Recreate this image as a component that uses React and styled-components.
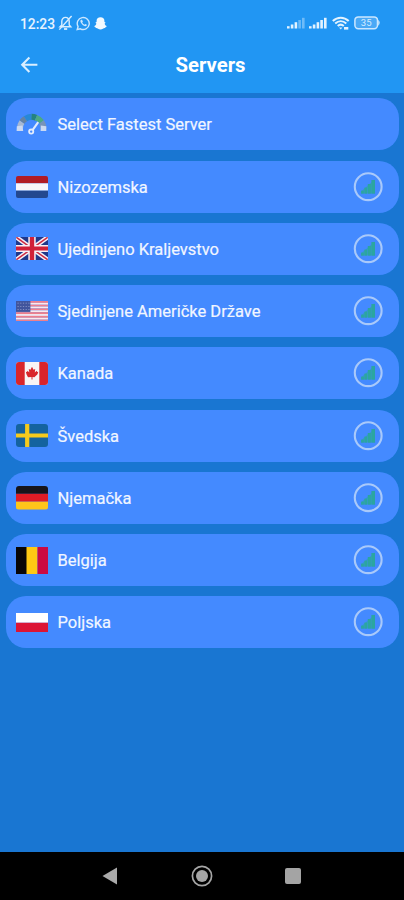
import React from 'react'
import styled, { createGlobalStyle } from 'styled-components'

const GlobalStyle = createGlobalStyle`
  * {
    box-sizing: border-box;
  }
  body {
    margin: 0;
    background: #1976d2;
    font-family: Roboto, "Noto Sans", sans-serif;
  }
  svg {
    display: block;
    flex: none;
  }
`

const Screen = styled.div`
  display: flex;
  flex-direction: column;
  width: 404px;
  height: 900px;
  overflow: hidden;
  background: #1976d2;
`

const Header = styled.header`
  flex: none;
  height: 93px;
  background: #2196f3;
  color: white;
`

const StatusBar = styled.div`
  display: flex;
  justify-content: space-between;
  height: 38px;
  padding: 8px 23px 0 20px;
`

const StatusGroup = styled.div`
  display: flex;
  align-items: center;
  gap: ${(props) => props.$gap}px;
  height: 30px;
`

const Clock = styled.span`
  width: 35px;
  padding-top: 1px;
  font-size: 13.8px;
  font-weight: 500;
  line-height: 30px;
  color: #e6f3ff;
  white-space: nowrap;
`

const TitleBar = styled.div`
  display: grid;
  grid-template-columns: 40px 1fr 41px;
  align-items: center;
  height: 54px;
  padding-left: 18px;
`

const Title = styled.h1`
  margin: 0;
  font-size: 20.3px;
  font-weight: 700;
  line-height: 24px;
  text-align: center;
`

const ServerList = styled.main`
  flex: 1;
  display: flex;
  flex-direction: column;
  gap: 10.25px;
  padding: 5.4px 5px 0 6px;
`

const ServerRow = styled.div`
  display: flex;
  align-items: center;
  flex: none;
  height: 52px;
  padding: 0 16px 0 10px;
  border-radius: 20px;
  background: #448aff;
`

const FlagBox = styled.div`
  width: 32px;
  height: ${(props) => props.$height}px;
  border-radius: ${(props) => props.$radius}px;
  overflow: hidden;
`

const ServerName = styled.span`
  flex: 1;
  padding: 2px 0 0 9.5px;
  font-size: 16.5px;
  line-height: 22px;
  color: #f1f6ff;
  -webkit-text-stroke: 0.2px #f1f6ff;
  white-space: nowrap;
`

const NavBar = styled.nav`
  display: flex;
  align-items: center;
  flex: none;
  height: 48px;
  padding-left: 101px;
  gap: 72.5px;
  background: black;
`

const Muted = () => (
  <svg width="15" height="16" viewBox="0 0 15 16" fill="none" stroke="#d9eeff" strokeWidth="1.4">
    <path d="M2 11.8H12.8L11.2 10V6.2C11.2 3.9 9.6 2.4 7.5 2.4S3.8 3.9 3.8 6.2V10Z" />
    <path d="M13.6 1L1.3 14.6" />
    <path d="M6 14H9.2" strokeWidth="1.8" />
  </svg>
)

const WhatsApp = () => (
  <svg width="15" height="15" viewBox="0 0 15 15">
    <path d="M1.2 13.5L2.1 10.6A6 6 0 1 1 4.4 12.8Z" fill="none" stroke="#cbe7ff" strokeWidth="1.4" />
    <path d="M5.1 3.8C4.3 4.3 4.2 5.4 4.8 6.5C5.8 8.5 7.4 9.8 9.1 10.2C10 10.4 10.9 9.7 10.9 8.8L9.3 7.9L8.5 8.7C7.4 8.2 6.6 7.4 6.2 6.5L6.9 5.7L6.1 3.8Z" fill="#cbe7ff" />
  </svg>
)

const Snapchat = () => (
  <svg width="13" height="13" viewBox="0 0 13 13">
    <path d="M6.5 .3C4 .3 2.6 1.8 2.6 3.8V5.1L1.4 5.5L2.4 6.7C2 7.9 1.3 8.5 .3 9C.4 10.2 1.6 10 2.1 11C3.5 10.9 4.4 12.6 6.5 12.6S9.5 10.9 10.9 11C11.4 10 12.6 10.2 12.7 9C11.7 8.5 11 7.9 10.6 6.7L11.6 5.5L10.4 5.1V3.8C10.4 1.8 9 .3 6.5 .3Z" fill="#f3faff" />
  </svg>
)

const Signal = ({ weak }) => (
  <svg width="18" height="12" viewBox="0 0 18 12" fill="#e3f3ff">
    <rect x="0" y="9.2" width="2.6" height="2.3" />
    <rect x="3.8" y="7.5" width="2.6" height="4" />
    <rect x="7.6" y="5.2" width="2.6" height="6.3" />
    <rect x="11.3" y="3" width="2.6" height="8.5" opacity={weak ? 0.4 : 1} />
    <rect x="15" y="0.8" width="2.6" height="10.7" opacity={weak ? 0.4 : 1} />
  </svg>
)

const Wifi = () => (
  <svg width="18" height="15" viewBox="0 0 18 15" fill="none" stroke="#e3f3ff" strokeWidth="2">
    <path d="M.8 5C5.5 .5 12 .5 16.7 5" />
    <path d="M3.2 7.6C6.6 4.4 10.9 4.4 14.3 7.6" />
    <path d="M5.7 10C7.6 8.3 9.9 8.3 11.8 10" />
    <path d="M7 11.4L8.8 13.4L10.3 11.4Z" fill="#e3f3ff" stroke="none" />
    <path d="M12 12.3H16.3" strokeWidth="2.6" />
  </svg>
)

const Battery = () => (
  <svg width="27" height="14" viewBox="0 0 27 14">
    <rect x=".9" y=".9" width="22.6" height="11.8" rx="3.4" fill="#4aa9f6" stroke="#cbe7ff" strokeWidth="1.5" />
    <path d="M24.3 3.8Q27 6.8 24.3 9.8Z" fill="#e3f3ff" />
    <text x="12.2" y="10.2" fontSize="9.5" fill="#d5ecff" textAnchor="middle">35</text>
  </svg>
)

const BackArrow = () => (
  <svg width="22" height="22" viewBox="0 0 22 22" fill="none" stroke="#d9eeff" strokeWidth="2.1">
    <path d="M19.4 10.7H4.2M11.4 3.5L4.2 10.7L11.4 17.9" />
  </svg>
)

const Gauge = () => (
  <svg width="32" height="22" viewBox="0 0 32 22">
    <g fill="none" strokeWidth="6">
      <path d="M4 15.5A12 11 0 0 1 6 9" stroke="#a6b8d3" />
      <path d="M6 9A12 11 0 0 1 9.5 5.7" stroke="#6583a4" />
      <path d="M9.5 5.7A12 11 0 0 1 15.5 3.8" stroke="#2788d6" />
      <path d="M15.5 3.8A12 11 0 0 1 20 4.8" stroke="#25837f" />
      <path d="M20 4.8A12 11 0 0 1 25.5 9" stroke="#4daa82" />
      <path d="M25.5 9A12 11 0 0 1 27.5 15.5" stroke="#7793b9" />
    </g>
    <path d="M.8 13.2L6.5 12.5L7.2 18H.6ZM24.8 12.5L30.3 13.2V18H24.6Z" fill="#cbd9f2" />
    <path d="M22.2 9.2L16 18" stroke="#448aff" strokeWidth="4" />
    <path d="M22.2 9.2L16.4 17.4" stroke="#e2ecfd" strokeWidth="2.1" />
    <circle cx="15.2" cy="18.6" r="2.1" fill="#448aff" stroke="#e2ecfd" strokeWidth="1.8" />
  </svg>
)

const Strength = () => (
  <svg width="30" height="30" viewBox="0 0 30 30">
    <circle cx="15.2" cy="14.7" r="13.4" fill="none" stroke="#a9c9fa" strokeWidth="2.1" />
    <g fill="#2ba6a0">
      <rect x="8.2" y="18.6" width="2.6" height="3" />
      <rect x="11.4" y="15.6" width="2.6" height="6" />
      <rect x="14.8" y="12" width="3" height="9.6" />
      <rect x="18.4" y="8" width="3.6" height="13.6" />
    </g>
    <path d="M8 19.4L21.8 7.4V21.6H8Z" fill="#2ba6a0" opacity=".55" />
  </svg>
)

const FlagSvg = ({ children }) => (
  <svg width="100%" height="100%" viewBox="0 0 32 24" preserveAspectRatio="none">
    {children}
  </svg>
)

const stripes = (colors) =>
  colors.map((color, i) => (
    <rect key={i} y={(24 / colors.length) * i} width="32" height={24 / colors.length} fill={color} />
  ))

const flags = {
  nl: stripes(['#b01c26', '#f8f6fa', '#23488f']),
  gb: (
    <>
      <rect width="32" height="24" fill="#20388a" />
      <path d="M0 0L32 24M32 0L0 24" stroke="#f3eef5" strokeWidth="4.6" />
      <path d="M0 0L32 24M32 0L0 24" stroke="#cf2a42" strokeWidth="1.5" />
      <path d="M16 0V24M0 12H32" stroke="#f8eff4" strokeWidth="7.4" />
      <path d="M16 0V24M0 12H32" stroke="#d02038" strokeWidth="4.4" />
    </>
  ),
  us: (
    <>
      {stripes(['#ee7f8b', '#fae9ec', '#ee7f8b', '#fae9ec', '#ee7f8b', '#fae9ec', '#ee7f8b', '#fae9ec', '#ee7f8b', '#fae9ec', '#ee7f8b'])}
      <rect width="14.4" height="12.8" fill="#41559c" />
      <path d="M1.5 2.5H13.5M1.5 6.3H13.5M1.5 10.1H13.5" stroke="#98a2cd" strokeWidth="1.1" strokeDasharray="1.2 1.5" />
    </>
  ),
  ca: (
    <>
      <rect width="32" height="24" fill="#f8f4f5" />
      <path d="M0 0H8.7V24H0ZM23.3 0H32V24H23.3Z" fill="#d9252b" />
      <path d="M16 5L17.5 8L19.2 7.2L18.8 11L20.6 9.2L21.2 10.4L22.3 10.2L21.5 12.8L18.4 15.8L16.5 15.6V18.2H15.5V15.6L12 15.8L10.5 12.8L9.8 10.2L11 10.4L11.5 9.2L13.3 11L12.8 7.2L14.5 8Z" fill="#d9252b" />
    </>
  ),
  se: (
    <>
      <rect width="32" height="24" fill="#14639f" />
      <path d="M11.2 0V24M0 12H32" stroke="#f6ca1c" strokeWidth="4.2" />
    </>
  ),
  de: stripes(['#17151a', '#df1c25', '#ffc61b']),
  be: (
    <>
      <rect width="11" height="24" fill="#080608" />
      <rect x="10.5" width="11" height="24" fill="#ffc914" />
      <rect x="21.5" width="10.5" height="24" fill="#cb0a42" />
    </>
  ),
  pl: stripes(['#ffffff', '#dc1435']),
}

const servers = [
  { code: 'nl', name: 'Nizozemska', height: 22, radius: 2 },
  { code: 'gb', name: 'Ujedinjeno Kraljevstvo', height: 23, radius: 1 },
  { code: 'us', name: 'Sjedinjene Američke Države', height: 20.5, radius: 0 },
  { code: 'ca', name: 'Kanada', height: 23, radius: 3 },
  { code: 'se', name: 'Švedska', height: 23, radius: 3 },
  { code: 'de', name: 'Njemačka', height: 23.5, radius: 3 },
  { code: 'be', name: 'Belgija', height: 27, radius: 0 },
  { code: 'pl', name: 'Poljska', height: 19.5, radius: 0 },
]

const App = () => {
  return (
    <Screen>
      <GlobalStyle />
      <Header>
        <StatusBar>
          <StatusGroup $gap={3}>
            <Clock>12:23</Clock>
            <Muted />
            <WhatsApp />
            <Snapchat />
          </StatusGroup>
          <StatusGroup $gap={4.5}>
            <Signal weak />
            <Signal />
            <Wifi />
            <Battery />
          </StatusGroup>
        </StatusBar>
        <TitleBar>
          <BackArrow />
          <Title>Servers</Title>
        </TitleBar>
      </Header>
      <ServerList>
        <ServerRow>
          <Gauge />
          <ServerName>Select Fastest Server</ServerName>
        </ServerRow>
        {servers.map((server) => (
          <ServerRow key={server.code}>
            <FlagBox $height={server.height} $radius={server.radius}>
              <FlagSvg>{flags[server.code]}</FlagSvg>
            </FlagBox>
            <ServerName>{server.name}</ServerName>
            <Strength />
          </ServerRow>
        ))}
      </ServerList>
      <NavBar>
        <svg width="17" height="18" viewBox="0 0 17 18">
          <path d="M1.5 9L16 .5V17.5Z" fill="#aaaaaa" />
        </svg>
        <svg width="22" height="22" viewBox="0 0 22 22">
          <circle cx="11" cy="11" r="9.6" fill="none" stroke="#a6a6a6" strokeWidth="1.7" />
          <circle cx="11" cy="11" r="6" fill="#a6a6a6" />
        </svg>
        <svg width="16" height="16" viewBox="0 0 16 16">
          <rect width="16" height="16" rx="2" fill="#a4a4a4" />
        </svg>
      </NavBar>
    </Screen>
  )
}

export default App
